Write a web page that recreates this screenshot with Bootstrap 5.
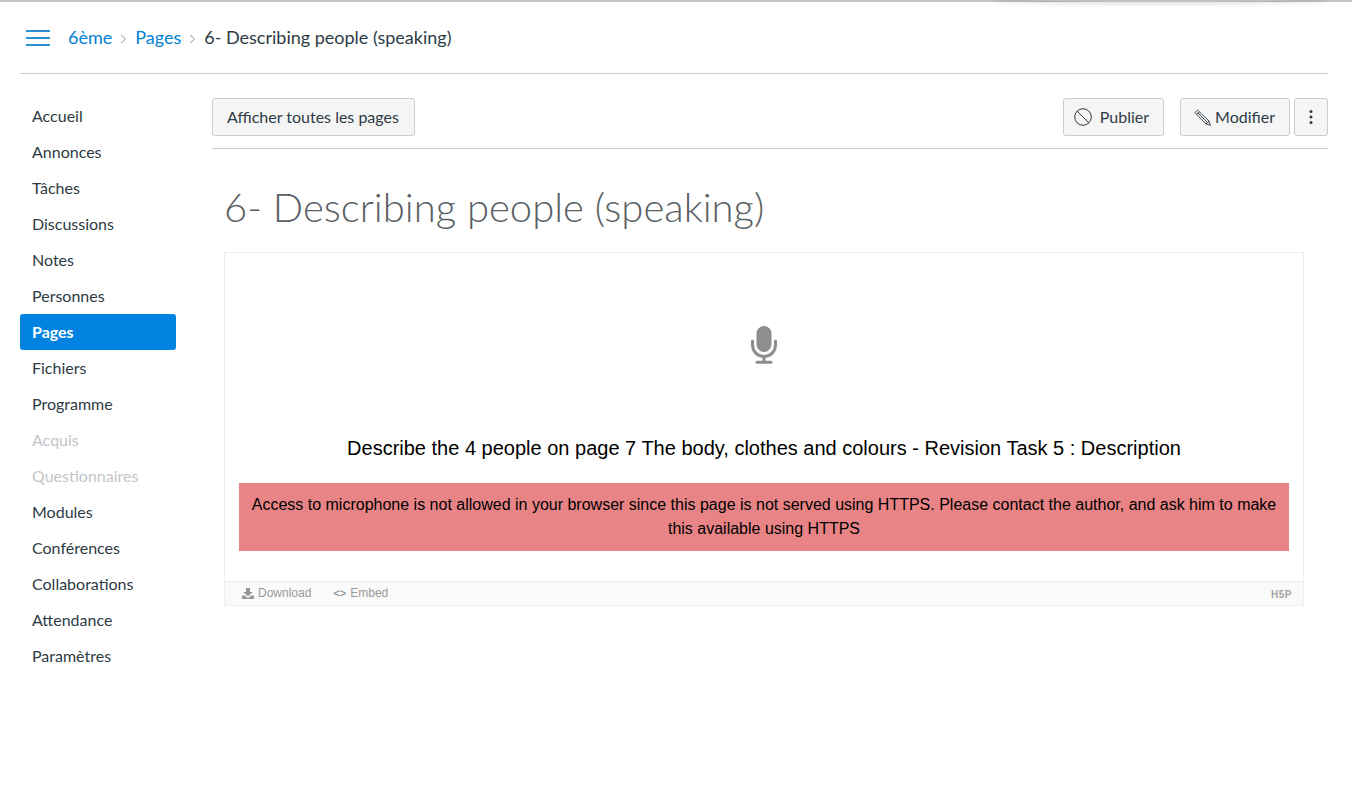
<!doctype html>
<html lang="fr"><head><meta charset="utf-8"><title>6- Describing people (speaking)</title>
<link rel="stylesheet" href="https://cdn.jsdelivr.net/npm/bootstrap@5.3.0/dist/css/bootstrap.min.css">
<style>
html,body{height:100%;overflow:hidden}
body{font-family:Lato,sans-serif;color:#2d3b45;background:#fff;font-size:16px}
.top-rule{height:2px;background:#c0c2c4;position:relative}
.top-glow{position:absolute;right:24px;top:-6px;width:336px;height:8px;border-radius:50%;box-shadow:0 2px 5px rgba(0,0,0,.13)}
.page-wrap{padding:0 24px 0 20px}
.crumb-bar{height:72px;border-bottom:1px solid #c7cdd1;padding-left:6px;font-size:18px}
.burger{width:24px;margin-right:18px;display:block}
.crumb-bar a{color:#0081d3;text-decoration:none}
.crumb-sep{width:23px;display:flex;justify-content:center;padding-top:2px}
.side-nav{width:156px;margin-top:24px;margin-right:36px;flex:none}
.side-nav a{display:block;height:36px;line-height:36px;padding-left:12px;color:#2d3b45;text-decoration:none;border-radius:3px}
.side-nav a.on{background:#0082e0;color:#fff;font-weight:700}
.side-nav a.off{color:#c1c5c9}
.main-col{flex:1;min-width:0}
.tool-row{margin-top:24px;padding-bottom:12px;border-bottom:1px solid #c7cdd1}
.cv-btn{height:38px;background:#f5f5f5;border:1px solid #c7cdd1;border-radius:3px;color:#2d3b45;font-size:16px;padding:0 14px;display:flex;align-items:center}
.cv-btn:hover{background:#f5f5f5;border-color:#c7cdd1;color:#2d3b45}
.all-btn{padding-right:15px}
.pub-btn{margin-right:16px;padding:0 14px 0 10px}
.mod-btn{margin-right:4px;padding-left:13px}
.more-btn{width:34px;padding:0;justify-content:center}
.page-title{font-size:40px;font-weight:300;color:#595f64;line-height:50px;margin:33px 0 20px 12px}
.h5p-box{width:1080px;margin-left:12px;height:354px;border:1px solid #eee;color:#000;font-family:"Liberation Sans",Arial,sans-serif}
.h5p-body{height:328px}
.mic-disc{width:96px;height:96px;margin-top:41px;border-radius:50%;background:#fff;box-shadow:0 0 8px rgba(0,0,0,.02);display:flex;align-items:center;justify-content:center;padding-top:6px}
.prompt{font-size:20px;line-height:24px;margin-top:46px;height:24px}
.alert-band{width:1050px;height:68px;margin-top:23px;background:#e88486;font-size:16px;line-height:24px;padding:10px 8px;text-align:center}
.h5p-foot{height:24px;background:#fafafa;border-top:1px solid #eee;color:#999;font-size:12px;line-height:20px;padding:0 11px 1px 17px}
.foot-item{margin-right:22px}
.code-mark{font-size:11px;margin-right:4px;font-weight:700}
.h5p-mark{font-weight:700;font-size:10px;color:#a4a4a4;letter-spacing:.5px;margin-top:3px}
</style></head>
<body>
<div class="top-rule"><div class="top-glow"></div></div>
<div class="page-wrap">
  <div class="crumb-bar d-flex align-items-center">
    <svg class="burger" viewBox="0 0 24 16" height="16" aria-hidden="true"><path d="M0 1h24M0 8h24M0 15h24" stroke="#2b8fd8" stroke-width="2"/></svg>
    <a href="#">6ème</a>
    <span class="crumb-sep"><svg width="7" height="10" viewBox="0 0 7 10"><path d="M1 .8 5.500 5 1 9.200" fill="none" stroke="#8b969e"/></svg></span>
    <a href="#">Pages</a>
    <span class="crumb-sep"><svg width="7" height="10" viewBox="0 0 7 10"><path d="M1 .8 5.500 5 1 9.200" fill="none" stroke="#8b969e"/></svg></span>
    <span>6- Describing people (speaking)</span>
  </div>
  <div class="d-flex">
    <nav class="side-nav">
      <a href="#">Accueil</a><a href="#">Annonces</a><a href="#">Tâches</a><a href="#">Discussions</a><a href="#">Notes</a><a href="#">Personnes</a><a href="#" class="on">Pages</a><a href="#">Fichiers</a><a href="#">Programme</a><a href="#" class="off">Acquis</a><a href="#" class="off">Questionnaires</a><a href="#">Modules</a><a href="#">Conférences</a><a href="#">Collaborations</a><a href="#">Attendance</a><a href="#">Paramètres</a>
    </nav>
    <main class="main-col">
      <div class="tool-row d-flex align-items-center">
        <button class="btn cv-btn all-btn">Afficher toutes les pages</button>
        <div class="ms-auto d-flex">
          <button class="btn cv-btn pub-btn"><svg width="18" height="18" viewBox="0 0 18 18" class="me-2" aria-hidden="true"><circle cx="9" cy="9" r="8.300" fill="none" stroke="#2d3b45"/><path d="M3.200 3.200 14.800 14.800" stroke="#2d3b45"/></svg>Publier</button>
          <button class="btn cv-btn mod-btn"><svg width="17" height="17" viewBox="0 0 17 17" class="me-1" aria-hidden="true"><path d="M1 3.500 3.500 1 15 12 16.300 16.300 12 15ZM2.800 5.500 5.500 2.800M3.500 3.500 14.300 14.300M12 15 15 12" fill="none" stroke="#2d3b45" stroke-width=".9"/></svg>Modifier</button>
          <button class="btn cv-btn more-btn" aria-label="Plus"><svg width="4" height="16" viewBox="0 0 4 16"><circle cx="2" cy="2.500" r="1.500" fill="#2d3b45"/><circle cx="2" cy="8" r="1.500" fill="#2d3b45"/><circle cx="2" cy="13.500" r="1.500" fill="#2d3b45"/></svg></button>
        </div>
      </div>
      <h1 class="page-title">6- Describing people (speaking)</h1>
      <section class="h5p-box">
        <div class="h5p-body d-flex flex-column align-items-center">
          <div class="mic-disc"><svg width="26" height="38" viewBox="0 0 26 38" aria-hidden="true"><rect x="5.500" y="0" width="15" height="26" rx="7.500" fill="#8e8e8e"/><path d="M1.500 15v3.500C1.500 25.500 6.500 30.500 13 30.500S24.500 25.500 24.500 18.500V15" fill="none" stroke="#8e8e8e" stroke-width="3" stroke-linecap="round"/><path d="M13 30v5" stroke="#8e8e8e" stroke-width="3"/><rect x="4.500" y="34.800" width="17" height="3" rx="1.500" fill="#8e8e8e"/></svg></div>
          <div class="prompt">Describe the 4 people on page 7 The body, clothes and colours - Revision Task 5 : Description</div>
          <div class="alert-band">Access to microphone is not allowed in your browser since this page is not served using HTTPS. Please contact the author, and ask him to make this available using HTTPS</div>
        </div>
        <div class="h5p-foot d-flex align-items-center">
          <span class="foot-item d-flex align-items-center"><svg width="12" height="11" viewBox="0 0 12 11" class="me-1" aria-hidden="true"><path d="M4 0h4v4h3L6 8.200 1 4h3ZM0 7.500h2.500L6 10l3.500-2.500H12V11H0Z" fill="#999"/></svg>Download</span>
          <span class="d-flex align-items-center"><span class="code-mark">&lt;&gt;</span>Embed</span>
          <span class="h5p-mark ms-auto">H5P</span>
        </div>
      </section>
    </main>
  </div>
</div>
<script src="https://cdn.jsdelivr.net/npm/bootstrap@5.3.0/dist/js/bootstrap.bundle.min.js"></script>
</body></html>
